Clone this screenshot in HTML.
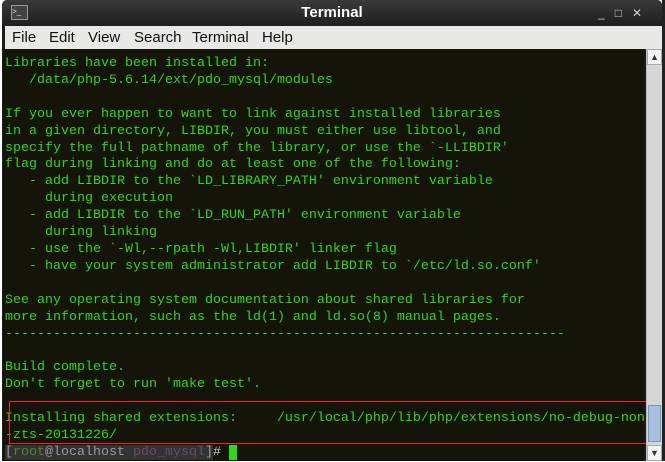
<!DOCTYPE html>
<html><head><style>
body{margin:0;width:665px;height:461px;overflow:hidden;background:#fff;position:relative;font-family:"Liberation Sans",sans-serif}
.win{position:absolute;left:2px;top:0;width:660px;height:461px;background:#1c1c1c;border-radius:5px 5px 0 0}
.title{position:absolute;left:0;top:0;width:660px;height:26px;background:linear-gradient(#3a3a3a,#1e1e1e);border-radius:5px 5px 0 0;color:#fff;font-weight:bold;font-size:15px;text-align:center;line-height:26px}
.icon{position:absolute;left:9px;top:5px;width:15px;height:13px;background:#444;border:1px solid #999;color:#ddd;font-size:8px;line-height:12px;text-align:left;font-weight:normal}
.ctl{position:absolute;right:10px;top:0;color:#ccc;font-size:12px;font-weight:normal;letter-spacing:10px}
.menu{position:absolute;left:3px;top:26px;width:657px;height:23px;background:#e8e8e6;font-size:15px;color:#111;line-height:24px}
.menu span{position:absolute;top:0}
.term{position:absolute;left:3px;top:49px;width:641px;height:412px;background:#141408}
pre{margin:0;position:absolute;left:5px;top:56px;font-family:"Liberation Mono",monospace;font-size:13.33px;line-height:16.9px;color:#33d814}
.sb{position:absolute;left:646px;top:49px;width:15px;height:412px;background:#d6d6d4;border-left:1px solid #bbb}
.sb .up{position:absolute;left:0;top:0;width:15px;height:16px;background:#f4f4f4;border:1px solid #aaa;box-sizing:border-box;font-size:9px;text-align:center;line-height:15px;color:#333}
.sb .th{position:absolute;left:1px;top:356px;width:13px;height:37px;background:#a8c0e0;border:1px solid #7a94b8;box-sizing:border-box}
.sb .dn{position:absolute;left:0;bottom:0;width:15px;height:16px;background:#f4f4f4;border:1px solid #aaa;box-sizing:border-box;font-size:9px;text-align:center;line-height:15px;color:#333}
.red{position:absolute;left:9px;top:401px;width:638px;height:43px;border:1px solid #ff2020;box-sizing:border-box}
.hl{background:#333}
.pu{color:#6a4a6a}
.cur{background:#33d814}
.rb{position:absolute;left:662px;top:0;width:3px;height:461px;background:#222}
</style></head><body>
<div class="win">
<div class="title"><div class="icon">&gt;_</div>Terminal<span class="ctl">_□✕</span></div>
<div class="menu"><span style="left:7px">File</span><span style="left:44px">Edit</span><span style="left:83px">View</span><span style="left:129px">Search</span><span style="left:187px">Terminal</span><span style="left:257px">Help</span></div>
</div>
<div class="term"></div>
<pre>Libraries have been installed in:
   /data/php-5.6.14/ext/pdo_mysql/modules

If you ever happen to want to link against installed libraries
in a given directory, LIBDIR, you must either use libtool, and
specify the full pathname of the library, or use the `-LLIBDIR'
flag during linking and do at least one of the following:
   - add LIBDIR to the `LD_LIBRARY_PATH' environment variable
     during execution
   - add LIBDIR to the `LD_RUN_PATH' environment variable
     during linking
   - use the `-Wl,--rpath -Wl,LIBDIR' linker flag
   - have your system administrator add LIBDIR to `/etc/ld.so.conf'

See any operating system documentation about shared libraries for
more information, such as the ld(1) and ld.so(8) manual pages.
----------------------------------------------------------------------

Build complete.
Don't forget to run 'make test'.

Installing shared extensions:     /usr/local/php/lib/php/extensions/no-debug-non
-zts-20131226/
<span class="hl" style="color:#999">[<span style="color:#4a8a2a">root</span>@localhost <span class="pu">pdo_mysql</span>]</span><span style="color:#ccc"># </span><span class="cur"> </span></pre>
<div class="red"></div>
<div class="sb"><div class="up">▲</div><div class="th"></div><div class="dn">▼</div></div>
<div class="rb"></div>
</body></html>
